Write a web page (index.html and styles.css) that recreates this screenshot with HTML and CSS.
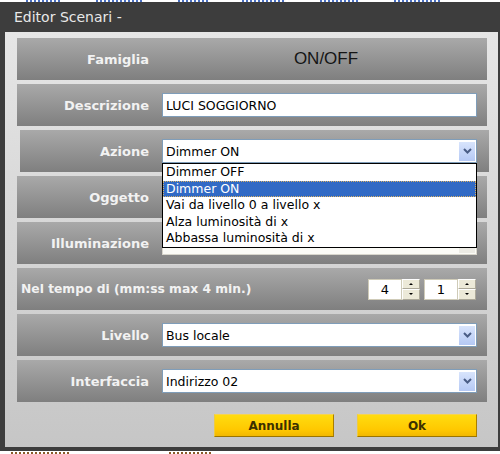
FILE: index.html
```html
<!DOCTYPE html>
<html lang="it">
<head>
    <meta charset="UTF-8">
    <meta name="viewport" content="width=device-width, initial-scale=1.0">
    <title>Editor Scenari</title>
    <link rel="stylesheet" href="styles.css">
</head>
<body>
    <!-- edges of the page behind the popup -->
    <div class="page-strip page-top">
        <span class="frag frag-blue" style="width: 36px"></span>
        <span class="frag frag-blue" style="width: 48px"></span>
        <span class="frag frag-blue" style="width: 30px"></span>
        <span class="frag frag-blue" style="width: 44px"></span>
        <span class="frag frag-blue" style="width: 40px"></span>
        <span class="frag frag-blue" style="width: 46px"></span>
    </div>

    <div class="window">
        <div class="titlebar">Editor Scenari -</div>

        <div class="panel">
            <div class="row">
                <div class="label">Famiglia</div>
                <div class="value">ON/OFF</div>
            </div>

            <div class="row">
                <div class="label">Descrizione</div>
                <div class="field">LUCI SOGGIORNO</div>
            </div>

            <div class="row row-shift">
                <div class="label">Azione</div>
                <div class="select-wrap">
                    <div class="select">
                        <span class="select-text">Dimmer ON</span>
                        <span class="select-arrow">
                            <svg width="9" height="6" viewBox="0 0 9 6"><path d="M1 1 L4.5 4.5 L8 1" fill="none" stroke="#4a5d86" stroke-width="2"/></svg>
                        </span>
                    </div>
                    <ul class="dropdown">
                        <li>Dimmer OFF</li>
                        <li class="selected">Dimmer ON</li>
                        <li>Vai da livello 0 a livello x</li>
                        <li>Alza luminosità di x</li>
                        <li>Abbassa luminosità di x</li>
                    </ul>
                </div>
            </div>

            <div class="row">
                <div class="label">Oggetto</div>
                <div class="select">
                    <span class="select-text"></span>
                    <span class="select-arrow"></span>
                </div>
            </div>

            <div class="row">
                <div class="label">Illuminazione</div>
                <div class="select select-disabled">
                    <span class="select-text"></span>
                    <span class="select-arrow"></span>
                </div>
            </div>

            <div class="row row-time">
                <div class="label label-left">Nel tempo di (mm:ss max 4 min.)</div>
                <div class="spinners">
                    <div class="spinner">
                        <div class="spin-value">4</div>
                        <div class="spin-buttons">
                            <span class="spin-btn"><i class="tri-up"></i></span>
                            <span class="spin-btn"><i class="tri-down"></i></span>
                        </div>
                    </div>
                    <div class="spinner">
                        <div class="spin-value">1</div>
                        <div class="spin-buttons">
                            <span class="spin-btn"><i class="tri-up"></i></span>
                            <span class="spin-btn"><i class="tri-down"></i></span>
                        </div>
                    </div>
                </div>
            </div>

            <div class="row">
                <div class="label">Livello</div>
                <div class="select">
                    <span class="select-text">Bus locale</span>
                    <span class="select-arrow">
                        <svg width="9" height="6" viewBox="0 0 9 6"><path d="M1 1 L4.5 4.5 L8 1" fill="none" stroke="#4a5d86" stroke-width="2"/></svg>
                    </span>
                </div>
            </div>

            <div class="row">
                <div class="label">Interfaccia</div>
                <div class="select">
                    <span class="select-text">Indirizzo 02</span>
                    <span class="select-arrow">
                        <svg width="9" height="6" viewBox="0 0 9 6"><path d="M1 1 L4.5 4.5 L8 1" fill="none" stroke="#4a5d86" stroke-width="2"/></svg>
                    </span>
                </div>
            </div>

            <div class="actions">
                <button class="btn">Annulla</button>
                <button class="btn">Ok</button>
            </div>
        </div>
    </div>

    <div class="page-strip page-bottom">
        <span class="frag frag-brown" style="width: 58px"></span>
        <span class="frag frag-brown" style="width: 42px"></span>
    </div>
</body>
</html>
```

FILE: styles.css
```css
body {
    margin: 0;
    background-color: #ffffff;
    font-family: "DejaVu Sans", sans-serif;
    overflow: hidden;
}

/* bits of the page behind the popup */
.page-strip {
    display: flex;
    overflow: hidden;
}
.page-top {
    height: 2px;
    gap: 34px;
    padding-left: 26px;
}
.page-bottom {
    height: 3px;
    gap: 100px;
    padding-left: 11px;
}
.frag {
    display: block;
    height: 2px;
    background: repeating-linear-gradient(90deg, currentColor 0 2px, transparent 2px 4px);
}
.frag-blue {
    color: #4a6fc0;
}
.frag-brown {
    color: #8a5a2a;
    margin-top: 1px;
}

.window {
    background-color: #3d3d3d;
    padding: 0 2px 4px 5px;
}
.titlebar {
    height: 30px;
    display: flex;
    align-items: center;
    padding-left: 9px;
    color: #e8e8e8;
    font-size: 14px;
}
.panel {
    background: linear-gradient(#e6e6e6, #c6c6c6);
    padding: 6px 11px 10px 12px;
}

.row {
    height: 42px;
    margin-bottom: 4px;
    display: grid;
    grid-template-columns: 132px 1fr;
    column-gap: 13px;
    align-items: center;
    padding-right: 10px;
    background: linear-gradient(#a9a9a9, #7f7f7f);
}
.row-shift {
    margin-left: 3px;
    margin-right: -2px;
    grid-template-columns: 129px 1fr;
    padding-right: 12px;
}
.label {
    text-align: right;
    color: #f2f2f2;
    font-weight: bold;
    font-size: 13px;
    white-space: nowrap;
}
.label-left {
    text-align: left;
    font-size: 12.3px;
}
.value {
    text-align: center;
    padding-left: 13px;
    font-family: "Liberation Sans", Arial, sans-serif;
    font-size: 17px;
    color: #151515;
}

.field,
.select {
    height: 24px;
    box-sizing: border-box;
    border: 1px solid #7f9db9;
    background-color: #ffffff;
    font-size: 12.5px;
    color: #000000;
    display: flex;
    align-items: center;
    padding-left: 3px;
}
.select-wrap {
    position: relative;
}
.select-text {
    flex: 1;
}
.select-arrow {
    width: 16px;
    height: 19px;
    margin-right: 1px;
    display: flex;
    align-items: center;
    justify-content: center;
    background: linear-gradient(#d8e4fc, #b5c9f5);
}
.select-disabled {
    background-color: #fbfbf6;
    border-color: #d8d6cc;
}
.select-disabled .select-arrow {
    background: #ecebe4;
}

.dropdown {
    position: absolute;
    top: 100%;
    left: 0;
    right: 0;
    z-index: 2;
    margin: 0;
    padding: 0;
    list-style: none;
    background-color: #ffffff;
    border: 1px solid #000000;
    font-size: 12.5px;
}
.dropdown li {
    height: 16.6px;
    line-height: 16.6px;
    padding-left: 3px;
    color: #000000;
    white-space: nowrap;
}
.dropdown li.selected {
    background-color: #316ac5;
    color: #ffffff;
    outline: 1px dotted #d8b064;
    outline-offset: -1px;
}

.row-time {
    display: flex;
    justify-content: space-between;
    padding-left: 4px;
    padding-right: 11px;
}
.spinners {
    display: flex;
    gap: 4px;
}
.spinner {
    display: flex;
    height: 21px;
}
.spin-value {
    width: 34px;
    box-sizing: border-box;
    border: 1px solid #cfcbb8;
    background-color: #ffffff;
    text-align: center;
    font-size: 13px;
    line-height: 19px;
}
.spin-buttons {
    width: 18px;
    display: flex;
    flex-direction: column;
}
.spin-btn {
    flex: 1;
    box-sizing: border-box;
    background-color: #ece9d8;
    border: 1px solid;
    border-color: #ffffff #aca899 #aca899 #ffffff;
    display: flex;
    align-items: center;
    justify-content: center;
}
.tri-up,
.tri-down {
    width: 0;
    height: 0;
    border-left: 2px solid transparent;
    border-right: 2px solid transparent;
}
.tri-up {
    border-bottom: 2px solid #000000;
}
.tri-down {
    border-top: 2px solid #000000;
}

.actions {
    display: flex;
    justify-content: flex-end;
    gap: 23px;
    margin-top: 12px;
    padding-right: 10px;
}
.btn {
    width: 120px;
    height: 23px;
    padding: 0;
    border: 1px solid;
    border-color: #f6d450 #a97f00 #9a7400 #eecb40;
    background: linear-gradient(#ffdc10, #ffc800 70%, #f2b800);
    color: #3b3000;
    font-family: "DejaVu Sans", sans-serif;
    font-weight: bold;
    font-size: 12px;
    cursor: pointer;
}
```
